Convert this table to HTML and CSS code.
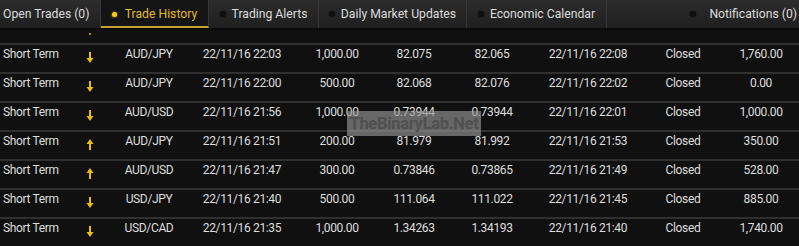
FILE: index.html
```html
<!DOCTYPE html>
<html>
<head>
<meta charset="utf-8">
<link rel="stylesheet" href="styles.css">
</head>
<body>
<div class="app">
  <nav class="tabs">
    <div class="tab tab-first">Open Trades (0)</div>
    <div class="tab active"><span class="dot"></span>Trade History</div>
    <div class="tab"><span class="dot"></span>Trading Alerts</div>
    <div class="tab"><span class="dot"></span>Daily Market Updates</div>
    <div class="tab"><span class="dot"></span>Economic Calendar</div>
    <div class="tab tab-last"><span class="dot"></span>Notifications (0)</div>
  </nav>
  <div class="rows">
    <div class="partial"><span class="tail"></span></div>

    <div class="row">
      <span class="c c-type">Short Term</span>
      <span class="c c-dir"><svg class="arrow" width="8" height="11" viewBox="0 0 8 11"><path d="M3 0h2v6h2.5L4 11 0.5 6H3z"/></svg></span>
      <span class="c">AUD/JPY</span><span class="c">22/11/16 22:03</span><span class="c">1,000.00</span><span class="c">82.075</span><span class="c">82.065</span><span class="c">22/11/16 22:08</span><span class="c">Closed</span><span class="c">1,760.00</span>
    </div>
    <div class="row">
      <span class="c c-type">Short Term</span>
      <span class="c c-dir"><svg class="arrow" width="8" height="11" viewBox="0 0 8 11"><path d="M3 0h2v6h2.5L4 11 0.5 6H3z"/></svg></span>
      <span class="c">AUD/JPY</span><span class="c">22/11/16 22:00</span><span class="c">500.00</span><span class="c">82.068</span><span class="c">82.076</span><span class="c">22/11/16 22:02</span><span class="c">Closed</span><span class="c">0.00</span>
    </div>
    <div class="row">
      <span class="c c-type">Short Term</span>
      <span class="c c-dir"><svg class="arrow" width="8" height="11" viewBox="0 0 8 11"><path d="M3 0h2v6h2.5L4 11 0.5 6H3z"/></svg></span>
      <span class="c">AUD/USD</span><span class="c">22/11/16 21:56</span><span class="c">1,000.00</span><span class="c">0.73944</span><span class="c">0.73944</span><span class="c">22/11/16 22:01</span><span class="c">Closed</span><span class="c">1,000.00</span>
    </div>
    <div class="row">
      <span class="c c-type">Short Term</span>
      <span class="c c-dir"><svg class="arrow" width="8" height="11" viewBox="0 0 8 11"><path d="M3 11h2V5h2.5L4 0 0.5 5H3z"/></svg></span>
      <span class="c">AUD/JPY</span><span class="c">22/11/16 21:51</span><span class="c">200.00</span><span class="c">81.979</span><span class="c">81.992</span><span class="c">22/11/16 21:53</span><span class="c">Closed</span><span class="c">350.00</span>
    </div>
    <div class="row">
      <span class="c c-type">Short Term</span>
      <span class="c c-dir"><svg class="arrow" width="8" height="11" viewBox="0 0 8 11"><path d="M3 11h2V5h2.5L4 0 0.5 5H3z"/></svg></span>
      <span class="c">AUD/USD</span><span class="c">22/11/16 21:47</span><span class="c">300.00</span><span class="c">0.73846</span><span class="c">0.73865</span><span class="c">22/11/16 21:49</span><span class="c">Closed</span><span class="c">528.00</span>
    </div>
    <div class="row">
      <span class="c c-type">Short Term</span>
      <span class="c c-dir"><svg class="arrow" width="8" height="11" viewBox="0 0 8 11"><path d="M3 0h2v6h2.5L4 11 0.5 6H3z"/></svg></span>
      <span class="c">USD/JPY</span><span class="c">22/11/16 21:40</span><span class="c">500.00</span><span class="c">111.064</span><span class="c">111.022</span><span class="c">22/11/16 21:45</span><span class="c">Closed</span><span class="c">885.00</span>
    </div>
    <div class="row">
      <span class="c c-type">Short Term</span>
      <span class="c c-dir"><svg class="arrow" width="8" height="11" viewBox="0 0 8 11"><path d="M3 0h2v6h2.5L4 11 0.5 6H3z"/></svg></span>
      <span class="c">USD/CAD</span><span class="c">22/11/16 21:35</span><span class="c">1,000.00</span><span class="c">1.34263</span><span class="c">1.34193</span><span class="c">22/11/16 21:40</span><span class="c">Closed</span><span class="c">1,740.00</span>
    </div>

    <div class="watermark">TheBinaryLab.Net</div>
  </div>
</div>
</body>
</html>
```
FILE: styles.css
```css
* { box-sizing: border-box; }
html, body { margin: 0; padding: 0; background: #101010; }
body {
  width: 799px;
  height: 246px;
  overflow: hidden;
  font-family: Roboto, "Noto Sans", sans-serif;
  font-size: 12px;
  color: #dedede;
}
.app { width: 799px; height: 246px; overflow: hidden; }

.tabs {
  display: flex;
  height: 30px;
  background: #0c0c0c;
  border-bottom: 2px solid #0a0a0a;
}
.tab {
  display: flex;
  align-items: center;
  justify-content: center;
  height: 28px;
  background: linear-gradient(#2c2c2c, #1f1f1f);
  border-right: 1px solid #373737;
  color: #dcdcdc;
  white-space: nowrap;
  font-size: 12.2px;
}
.tab:nth-child(1) { width: 101px; justify-content: flex-start; padding-left: 3px; }
.tab:nth-child(2) { width: 108px; }
.tab:nth-child(3) { width: 110px; }
.tab:nth-child(4) { width: 148px; }
.tab:nth-child(5) { width: 140px; }
.tab:nth-child(6) { flex: 1; justify-content: flex-end; padding-right: 2px; border-right: 0; }
.dot {
  width: 6px;
  height: 6px;
  border-radius: 50%;
  background: #0f0f0f;
  box-shadow: 0 0 2px #101010;
  margin-right: 6px;
}
.tab-last .dot { margin-right: 13px; }
.tab.active {
  background: #141414;
  color: #e2b92c;
  border-bottom: 2px solid #c4a233;
  padding-top: 2px;
}
.tab.active .dot { width: 5px; height: 5px; margin-right: 8px; background: #f5cc1a; box-shadow: 0 0 2px #f0c419; }

.rows { position: relative; }
.partial { height: 13px; position: relative; }
.tail {
  position: absolute;
  left: 89px;
  top: 3px;
  width: 2px;
  height: 2px;
  background: #a88a14;
}
.row {
  display: grid;
  grid-template-columns: 70px 40px 78px 108px 82px 72px 84px 108px 82px 74px;
  height: 29px;
  border-top: 2px solid #303030;
  padding-top: 1px;
  line-height: 16px;
  letter-spacing: -0.35px;
}
.c { text-align: center; white-space: nowrap; }
.c-type { text-align: left; padding-left: 3px; }
.c-dir { padding-top: 6px; line-height: 0; }
.arrow { fill: #e8bd12; }

.watermark {
  position: absolute;
  left: 347px;
  top: 81px;
  width: 134px;
  height: 25px;
  background: rgba(150, 150, 150, 0.65);
  color: #505050;
  font-weight: 700;
  font-size: 16.5px;
  letter-spacing: -0.3px;
  line-height: 25px;
  text-align: center;
}
```
